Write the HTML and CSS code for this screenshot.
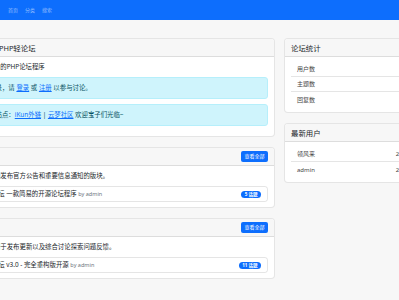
FILE: index.html
```html
<!DOCTYPE html>
<html lang="zh-CN">
<head>
    <meta charset="UTF-8">
    <meta name="viewport" content="width=device-width, initial-scale=1.0">
    <title>PHP轻论坛</title>
    <link rel="stylesheet" href="styles.css">
</head>
<body>
    <nav class="navbar">
        <div class="nav-links">
            <a href="#">首页</a>
            <a href="#">分类</a>
            <a href="#">搜索</a>
        </div>
    </nav>
    <main class="layout">
        <section class="main-col">
            <div class="card">
                <div class="card-header">欢迎您来到PHP轻论坛</div>
                <div class="card-body">
                    <p class="intro">一个简单轻量的PHP论坛程序</p>
                    <div class="alert">您尚未登录，请 <a href="#">登录</a> 或 <a href="#">注册</a> 以参与讨论。</div>
                    <div class="alert">合作伙伴站点：<a href="#">iKun外链</a> | <a href="#">云梦社区</a> 欢迎宝子们光临~</div>
                </div>
            </div>
            <div class="card">
                <div class="card-header split">
                    <span>官方公告</span>
                    <a class="btn" href="#">查看全部</a>
                </div>
                <div class="card-body">
                    <p class="desc">这是一个专门发布官方公告和重要信息通知的版块。</p>
                    <div class="topic">
                        <span class="topic-title">PHP轻论坛 一款简易的开源论坛程序 <small>by admin</small></span>
                        <span class="badge">5 话题</span>
                    </div>
                </div>
            </div>
            <div class="card">
                <div class="card-header split">
                    <span>综合讨论</span>
                    <a class="btn" href="#">查看全部</a>
                </div>
                <div class="card-body">
                    <p class="desc">本版块主要用于发布更新以及综合讨论探索问题反馈。</p>
                    <div class="topic">
                        <span class="topic-title">PHP轻论坛 v3.0 - 完全重构版开源 <small>by admin</small></span>
                        <span class="badge">11 话题</span>
                    </div>
                </div>
            </div>
        </section>
        <aside class="side-col">
            <div class="card">
                <div class="card-header">论坛统计</div>
                <div class="card-body">
                    <ul class="list">
                        <li><span>用户数</span><span>2</span></li>
                        <li><span>主题数</span><span>2</span></li>
                        <li><span>回复数</span><span>0</span></li>
                    </ul>
                </div>
            </div>
            <div class="card">
                <div class="card-header">最新用户</div>
                <div class="card-body">
                    <ul class="list">
                        <li><span>领风来</span><span>2024-05-12</span></li>
                        <li><span>admin</span><span>2024-05-10</span></li>
                    </ul>
                </div>
            </div>
        </aside>
    </main>
</body>
</html>
```

FILE: styles.css
```css
html, body {
    margin: 0;
    padding: 0;
    overflow: hidden;
}
body {
    background-color: #f7f7f7;
    color: #212529;
    font-family: "Noto Sans", "Noto Sans CJK SC", sans-serif;
    font-size: 6.4px;
    line-height: 10px;
}
a {
    color: #0d6efd;
}
/* 顶部导航 */
.navbar {
    height: 20px;
    background-color: #0d6efd;
    display: flex;
    align-items: center;
}
.nav-links {
    display: flex;
    padding-left: 4.5px;
}
.nav-links a {
    color: rgba(255, 255, 255, 0.55);
    text-decoration: none;
    font-size: 5px;
    padding: 0 3.5px;
    line-height: 8px;
}
/* 主体两栏 */
.layout {
    display: grid;
    grid-template-columns: 320px 156px;
    column-gap: 9px;
    padding-top: 18px;
    margin-left: -45px;
}
.card {
    background-color: #fff;
    border: 1px solid rgba(0, 0, 0, 0.1);
    border-radius: 4px;
    margin-bottom: 10px;
    overflow: hidden;
}
.card-header {
    height: 18px;
    box-sizing: border-box;
    padding: 0 6px;
    display: flex;
    align-items: center;
    background-color: #f7f7f7;
    border-bottom: 1px solid rgba(0, 0, 0, 0.1);
    font-size: 7.4px;
    white-space: nowrap;
}
.split {
    justify-content: space-between;
}
.card-body {
    padding: 5px 6px;
}
.intro, .desc {
    margin: 0 0 5px 0;
    white-space: nowrap;
}
.alert {
    height: 22px;
    box-sizing: border-box;
    display: flex;
    align-items: center;
    padding: 0 7px;
    margin-bottom: 5px;
    background-color: #cff4fc;
    border: 1px solid #b6effb;
    border-radius: 3px;
    color: #055160;
    white-space: pre;
}
.btn {
    font-size: 5px;
    line-height: 7px;
    padding: 2px 3.5px;
    color: #fff;
    background-color: #0d6efd;
    border-radius: 2px;
    text-decoration: none;
}
/* 话题条目 */
.topic {
    height: 16px;
    box-sizing: border-box;
    display: flex;
    align-items: center;
    justify-content: space-between;
    padding: 0 6px 0 10px;
    border: 1px solid rgba(0, 0, 0, 0.1);
    border-radius: 3px;
    white-space: nowrap;
}
.topic small {
    color: #6c757d;
    font-size: 5.5px;
}
.badge {
    font-size: 4.5px;
    line-height: 5px;
    padding: 1px 3.5px;
    color: #fff;
    background-color: #0d6efd;
    border-radius: 10px;
    font-weight: bold;
}
/* 右侧列表 */
.list {
    margin: 0;
    padding: 0;
    list-style: none;
}
.list li {
    height: 15px;
    box-sizing: border-box;
    display: flex;
    align-items: center;
    justify-content: space-between;
    padding: 0 6px;
    border-bottom: 1px solid rgba(0, 0, 0, 0.1);
    color: #444;
    font-size: 6px;
}
.list li:last-child {
    border-bottom: none;
}
```
